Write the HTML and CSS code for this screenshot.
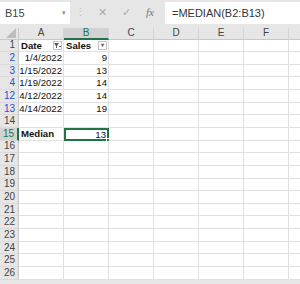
FILE: index.html
```html
<!DOCTYPE html>
<html lang="en">
<head>
    <meta charset="UTF-8">
    <title>Median</title>
    <link rel="stylesheet" href="styles.css">
</head>
<body>
    <div class="bar">
        <div class="namebox">B15<span class="caret">&#9662;</span></div>
        <div class="dots">&#8942;</div>
        <div class="tool">&#10005;</div>
        <div class="tool">&#10003;</div>
        <div class="tool fx"><i>fx</i></div>
        <div class="formula">=MEDIAN(B2:B13)</div>
    </div>
    <div class="sheet" id="sheet">
        <div class="corner"><svg width="10" height="10" viewBox="0 0 10 10"><polygon points="10,0 10,10 0,10" fill="#bdbdbd"/></svg></div>
        <div class="colhead">A</div>
        <div class="colhead sel">B</div>
        <div class="colhead">C</div>
        <div class="colhead">D</div>
        <div class="colhead">E</div>
        <div class="colhead">F</div>
        <div class="colhead"></div>
    </div>

    <script>
        const rows = [
            { n: 1, a: 'Date', b: 'Sales', head: true },
            { n: 2, a: '1/4/2022', b: '9', blue: true },
            { n: 3, a: '1/15/2022', b: '13', blue: true },
            { n: 4, a: '1/19/2022', b: '14', blue: true },
            { n: 12, a: '4/12/2022', b: '14', blue: true },
            { n: 13, a: '4/14/2022', b: '19', blue: true },
            { n: 14 },
            { n: 15, a: 'Median', b: '13', active: true }
        ];
        for (let i = 16; i <= 26; i++) rows.push({ n: i });

        const sheet = document.getElementById('sheet');
        let html = '';
        rows.forEach(r => {
            let cls = 'rowhead';
            if (r.blue) cls += ' blue';
            if (r.active) cls += ' sel';
            html += `<div class="${cls}">${r.n}</div>`;
            if (r.head) {
                html += `<div class="cell bold">Date<span class="filter on"><svg width="7" height="7" viewBox="0 0 7 7"><polygon points="0,1 5,1 3,4 3,6 2,6 2,4" fill="#555"/><rect x="5" y="4" width="2" height="1" fill="#555"/></svg></span></div>`;
                html += `<div class="cell bold">Sales<span class="filter">&#9662;</span></div>`;
            } else if (r.active) {
                html += `<div class="cell bold">${r.a}</div>`;
                html += `<div class="cell num active">${r.b}</div>`;
            } else {
                html += `<div class="cell num">${r.a || ''}</div>`;
                html += `<div class="cell num">${r.b || ''}</div>`;
            }
            for (let c = 0; c < 5; c++) html += '<div class="cell"></div>';
        });
        sheet.insertAdjacentHTML('beforeend', html);
    </script>
</body>
</html>
```

FILE: styles.css
```css
body {
    margin: 0;
    font-family: "Liberation Sans", "Open Sans", sans-serif;
    background-color: #e6e6e6;
    width: 300px;
    height: 284px;
    overflow: hidden;
}
.bar {
    display: flex;
    align-items: center;
    height: 28px;
    box-sizing: border-box;
    color: #555;
    font-size: 11px;
}
.namebox {
    background-color: white;
    width: 70px;
    height: 22px;
    margin-top: 1px;
    margin-bottom: 4px;
    box-sizing: border-box;
    padding-left: 5px;
    display: flex;
    align-items: center;
    justify-content: space-between;
    color: #444;
}
.caret {
    font-size: 7px;
    color: #888;
    padding-right: 4px;
}
.dots {
    width: 20px;
    text-align: center;
    color: #bbb;
    margin-bottom: 4px;
}
.tool {
    width: 24px;
    text-align: center;
    color: #aaa;
    margin-bottom: 4px;
}
.fx {
    font-family: "Liberation Serif", serif;
    color: #777;
}
.formula {
    background-color: white;
    flex: 1;
    height: 22px;
    margin-top: 1px;
    margin-left: 3px;
    margin-bottom: 4px;
    padding-left: 7px;
    display: flex;
    align-items: center;
    color: #333;
    font-size: 11px;
}
.sheet {
    display: grid;
    grid-template-columns: 19px repeat(6, 45px) 20px;
    grid-template-rows: 11.5px;
    grid-auto-rows: 12.65px;
    background-color: white;
}
.corner, .colhead, .rowhead {
    background-color: #e6e6e6;
    color: #444;
    font-size: 10px;
    box-sizing: border-box;
}
.corner {
    display: flex;
    align-items: flex-end;
    justify-content: flex-end;
    padding: 0 2px 1px 0;
    border-right: 1px solid #c8c8c8;
    border-bottom: 1px solid #c8c8c8;
}
.colhead {
    display: flex;
    align-items: center;
    justify-content: center;
    border-right: 1px solid #d4d4d4;
    border-bottom: 1px solid #c8c8c8;
    line-height: 1;
}
.colhead.sel {
    background-color: #d2d2d2;
    border-bottom: 2px solid #217346;
    color: #217346;
}
.rowhead {
    display: flex;
    align-items: center;
    justify-content: flex-end;
    padding-right: 3px;
    border-right: 1px solid #c8c8c8;
    border-bottom: 1px solid #dadada;
    line-height: 1;
}
.rowhead.blue {
    color: #2a4fd0;
}
.rowhead.sel {
    background-color: #d2d2d2;
    border-right: 2px solid #217346;
    color: #217346;
}
.cell {
    border-right: 1px solid #e1e1e1;
    border-bottom: 1px solid #e1e1e1;
    box-sizing: border-box;
    font-size: 9.6px;
    color: #111;
    padding: 0 1px 0 2px;
    display: flex;
    align-items: center;
    line-height: 1;
    position: relative;
    white-space: nowrap;
}
.num {
    justify-content: flex-end;
}
.bold {
    font-weight: bold;
}
.filter {
    position: absolute;
    right: 1px;
    top: 1px;
    width: 9px;
    height: 9px;
    border: 1px solid #c4c4c4;
    background-color: white;
    display: flex;
    align-items: center;
    justify-content: center;
    font-size: 6px;
    color: #666;
    box-sizing: border-box;
}
.active {
    border: 2px solid #217346;
}
.active::after {
    content: "";
    position: absolute;
    right: -3px;
    bottom: -3px;
    width: 4px;
    height: 4px;
    background-color: #217346;
    border: 1px solid white;
    box-sizing: border-box;
}
```
